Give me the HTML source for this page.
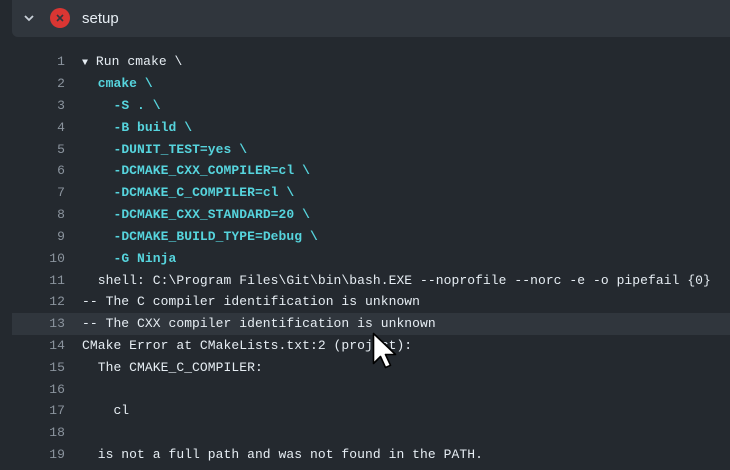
<!DOCTYPE html>
<html><head><style>
body{margin:0;width:730px;height:470px;background:#24292f;overflow:hidden;position:relative;font-family:"Liberation Mono",monospace;}
.hdr{position:absolute;left:12px;top:0;width:730px;height:37px;background:#30363d;border-radius:0 0 0 6px;}
.hdr .t{position:absolute;left:70px;top:10px;font:15px "Liberation Sans",sans-serif;color:#e6edf3;}
.ln{position:absolute;left:0;width:730px;height:22px;font-size:13px;line-height:22px;color:#e6edf3;white-space:pre;letter-spacing:0.06px;}
.ln .n{position:absolute;left:30px;width:35px;text-align:right;color:#8b949e;}
.ln .c{position:absolute;left:82px;}
.b{color:#56d4dd;font-weight:bold;}
.hl{background:#30363d;left:12px;}
.hl .n{left:18px;}
.hl .c{left:70px;}
</style></head><body>
<div class="hdr">
<svg style="position:absolute;left:10px;top:11px" width="14" height="14" viewBox="0 0 14 14"><path d="M3 5l4 4 4-4" stroke="#c9d1d9" stroke-width="1.8" fill="none"/></svg>
<svg style="position:absolute;left:37px;top:7px" width="22" height="22" viewBox="0 0 22 22"><circle cx="11" cy="11" r="10" fill="#da3633"/><path d="M8 8l6 6M14 8l-6 6" stroke="#30363d" stroke-width="1.6"/></svg>
<span class="t">setup</span>
</div>
<div class="ln" style="top:51px"><span class="n">1</span><span class="c"><span style="font-size:10px">▼</span> Run cmake \</span></div>
<div class="ln" style="top:73px"><span class="n">2</span><span class="c">  <span class="b">cmake \</span></span></div>
<div class="ln" style="top:95px"><span class="n">3</span><span class="c">    <span class="b">-S . \</span></span></div>
<div class="ln" style="top:117px"><span class="n">4</span><span class="c">    <span class="b">-B build \</span></span></div>
<div class="ln" style="top:139px"><span class="n">5</span><span class="c">    <span class="b">-DUNIT_TEST=yes \</span></span></div>
<div class="ln" style="top:160px"><span class="n">6</span><span class="c">    <span class="b">-DCMAKE_CXX_COMPILER=cl \</span></span></div>
<div class="ln" style="top:182px"><span class="n">7</span><span class="c">    <span class="b">-DCMAKE_C_COMPILER=cl \</span></span></div>
<div class="ln" style="top:204px"><span class="n">8</span><span class="c">    <span class="b">-DCMAKE_CXX_STANDARD=20 \</span></span></div>
<div class="ln" style="top:226px"><span class="n">9</span><span class="c">    <span class="b">-DCMAKE_BUILD_TYPE=Debug \</span></span></div>
<div class="ln" style="top:248px"><span class="n">10</span><span class="c">    <span class="b">-G Ninja</span></span></div>
<div class="ln" style="top:270px"><span class="n">11</span><span class="c">  shell: C:\Program Files\Git\bin\bash.EXE --noprofile --norc -e -o pipefail {0}</span></div>
<div class="ln" style="top:291px"><span class="n">12</span><span class="c">-- The C compiler identification is unknown</span></div>
<div class="ln hl" style="top:313px"><span class="n">13</span><span class="c">-- The CXX compiler identification is unknown</span></div>
<div class="ln" style="top:335px"><span class="n">14</span><span class="c">CMake Error at CMakeLists.txt:2 (project):</span></div>
<div class="ln" style="top:357px"><span class="n">15</span><span class="c">  The CMAKE_C_COMPILER:</span></div>
<div class="ln" style="top:379px"><span class="n">16</span><span class="c"></span></div>
<div class="ln" style="top:400px"><span class="n">17</span><span class="c">    cl</span></div>
<div class="ln" style="top:422px"><span class="n">18</span><span class="c"></span></div>
<div class="ln" style="top:444px"><span class="n">19</span><span class="c">  is not a full path and was not found in the PATH.</span></div>
<svg style="position:absolute;left:372px;top:332px" width="26" height="38" viewBox="0 0 26 38"><path d="M1.5 1.5v30l7-7 5 11 5-2.2-5-10.8h10z" fill="#fff" stroke="#000" stroke-width="1.6" stroke-linejoin="round"/></svg>
</body></html>
